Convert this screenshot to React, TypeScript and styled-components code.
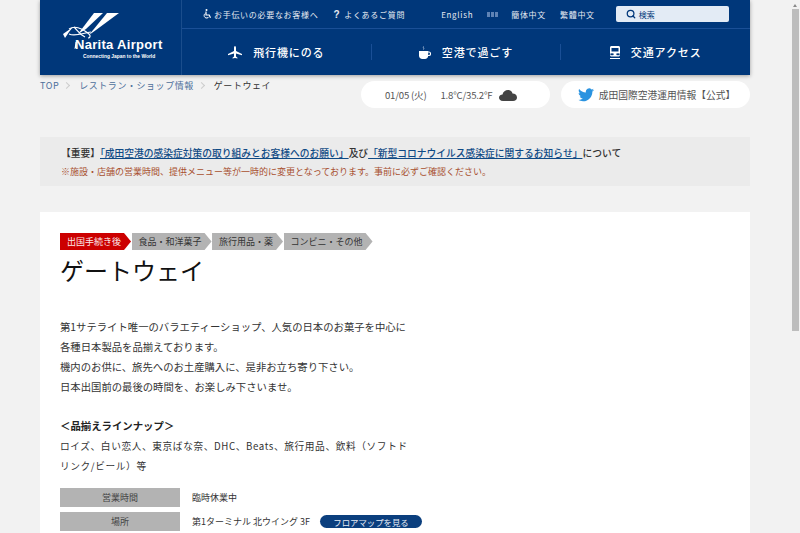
import React from 'react'
import styled, { createGlobalStyle } from 'styled-components'
import { Search } from 'lucide-react'

const GlobalStyle = createGlobalStyle`
  html, body {
    margin: 0;
    padding: 0;
    height: 533px;
    overflow: hidden;
  }
  body {
    background: #f2f2f2;
    color: #333;
    font-family: "Noto Sans CJK JP", "Noto Sans", sans-serif;
  }
  * {
    box-sizing: border-box;
  }
`

const Viewport = styled.div`
  display: flex;
  height: 533px;
  overflow: hidden;
`

const Page = styled.div`
  flex: 1;
  min-width: 0;
  padding: 0 40px;
`

const Scrollbar = styled.div`
  width: 10px;
  display: flex;
  flex-direction: column;
  align-items: flex-start;
  padding: 4px 0 0 2px;
`

const ArrowUp = styled.div`
  width: 0;
  height: 0;
  margin: 0 0 2px 1px;
  border-left: 2.5px solid transparent;
  border-right: 2.5px solid transparent;
  border-bottom: 3px solid #8a8a8a;
`

const Thumb = styled.div`
  width: 7px;
  height: 322px;
  background: #bdbdbd;
`

const Header = styled.header`
  display: flex;
  height: 75px;
  background: #00377a;
  box-shadow: 0 1px 4px rgba(0, 0, 0, 0.35);
  color: #fff;
`

const LogoLink = styled.a`
  width: 142px;
  flex: none;
  display: flex;
  flex-direction: column;
  align-items: flex-start;
  padding: 12px 0 0 21px;
  border-right: 1px solid #1a4d8c;
`

const LogoSvg = styled.svg`
  overflow: visible;
`

const LogoName = styled.div`
  font-family: "Liberation Sans", sans-serif;
  font-weight: 700;
  font-size: 13px;
  line-height: 13px;
  margin: -1px 0 0 14px;
  letter-spacing: 0.3px;
  white-space: nowrap;
`

const LogoTag = styled.div`
  font-family: "Liberation Sans", sans-serif;
  font-size: 4.9px;
  font-weight: 700;
  line-height: 7px;
  margin: 2px 0 0 22px;
  white-space: nowrap;
`

const HeaderMain = styled.div`
  flex: 1;
  display: flex;
  flex-direction: column;
`

const TopBar = styled.div`
  height: 29px;
  display: flex;
  align-items: center;
  border-bottom: 1px solid #1a4f96;
  padding-left: 21px;
  font-size: 8px;
  letter-spacing: 0.7px;
`

const HelpLink = styled.a<{ $gap: number }>`
  display: flex;
  align-items: center;
  gap: 2px;
  white-space: nowrap;
  margin-right: ${props => props.$gap}px;
  color: #e6ebf2;
`

const Question = styled.span`
  font-family: "Liberation Sans", sans-serif;
  font-weight: 700;
  font-size: 10px;
  margin-right: 2px;
`

const LangLink = styled.a<{ $gap: number }>`
  white-space: nowrap;
  margin-right: ${props => props.$gap}px;
  color: #e6ebf2;
`

const Korean = styled.span`
  width: 11px;
  height: 5px;
  margin-right: 13px;
  background: repeating-linear-gradient(90deg, #5f83b5 0 3px, transparent 3px 4px);
`

const SearchBox = styled.div`
  width: 113px;
  height: 16px;
  border-radius: 2px;
  background: #e3ebf5;
  color: #00377a;
  display: flex;
  align-items: center;
  gap: 3px;
  padding-left: 10px;
  font-size: 8px;
  letter-spacing: 0;
`

const Nav = styled.nav`
  flex: 1;
  display: flex;
  align-items: center;
`

const NavItem = styled.a<{ $divider?: boolean }>`
  flex: 1;
  height: 16px;
  display: flex;
  align-items: center;
  justify-content: center;
  gap: 11px;
  font-size: 11px;
  font-weight: 500;
  letter-spacing: 0.9px;
  white-space: nowrap;
  border-left: ${props => (props.$divider ? '1px solid #1a4f96' : 'none')};
`

const SubRow = styled.div`
  display: flex;
  justify-content: space-between;
  height: 62px;
`

const Crumbs = styled.ol`
  display: flex;
  align-items: center;
  height: 20px;
  margin: 0;
  padding: 0;
  list-style: none;
  font-size: 9px;
  letter-spacing: 0.55px;
`

const Crumb = styled.li<{ $current?: boolean }>`
  color: ${props => (props.$current ? '#333' : '#4d6f9a')};
`

const CrumbSep = styled.span`
  width: 5px;
  height: 5px;
  margin: 0 10px 0 5px;
  border-top: 1px solid #ccc;
  border-right: 1px solid #ccc;
  transform: rotate(45deg);
`

const Pills = styled.div`
  display: flex;
  gap: 11px;
  padding-top: 6px;
`

const Pill = styled.div<{ $center?: boolean }>`
  width: 189px;
  height: 27px;
  border-radius: 14px;
  background: #fff;
  display: flex;
  align-items: center;
  justify-content: ${props => (props.$center ? 'center' : 'flex-start')};
  padding-left: ${props => (props.$center ? 2 : 24)}px;
  font-size: 9.75px;
  color: #555;
  white-space: nowrap;
`

const DateText = styled.span`
  margin-right: 14px;
  font-size: 9.6px;
  letter-spacing: -0.2px;
`

const TempText = styled.span`
  font-size: 9.6px;
  letter-spacing: -0.2px;
`

const CloudIcon = styled.svg`
  width: 18px;
  height: 12px;
  margin-left: 7px;
`

const TwitterIcon = styled.svg`
  width: 16px;
  height: 14px;
  margin-right: 5px;
`

const Notice = styled.section`
  height: 49px;
  background: #ebebeb;
  padding: 8px 20px 0 21px;
  margin-bottom: 26px;
`

const NoticeLine = styled.p`
  margin: 0;
  font-size: 9.75px;
  font-weight: 500;
  line-height: 16px;
  white-space: nowrap;
  color: #333;
`

const NoticeLink = styled.a`
  color: #0f4a85;
  text-decoration: underline;
`

const NoticeNote = styled.p`
  margin: 4px 0 0;
  font-size: 9px;
  line-height: 14px;
  color: #a8502f;
  white-space: nowrap;
`

const Card = styled.main`
  background: #fff;
  padding: 21px 20px 0;
  height: 340px;
`

const Tags = styled.ul`
  display: flex;
  gap: 0.5px;
  margin: 0;
  padding: 0;
  list-style: none;
`

const Tag = styled.li<{ $accent?: boolean }>`
  height: 17px;
  display: flex;
  align-items: center;
  padding: 0 10px 0 7px;
  font-size: 9px;
  white-space: nowrap;
  color: ${props => (props.$accent ? '#fbe9e9' : '#333')};
  background: ${props => (props.$accent ? '#cc0000' : '#b3b3b3')};
  clip-path: polygon(0 0, calc(100% - 7px) 0, 100% 50%, calc(100% - 7px) 100%, 0 100%);
`

const Title = styled.h1`
  margin: 2px 0 29px;
  font-size: 24px;
  font-weight: 400;
  line-height: 36px;
  color: #111;
`

const Lead = styled.p`
  margin: 0 0 20px;
  font-size: 10.35px;
  line-height: 20px;
  color: #333;
  white-space: nowrap;
`

const SubHeading = styled.h2`
  margin: 2px 0 1px;
  font-size: 10.4px;
  font-weight: 700;
  line-height: 18px;
  color: #222;
`

const Lineup = styled.p`
  width: 352px;
  margin: 0 0 12px;
  font-size: 9.7px;
  line-height: 20px;
  letter-spacing: 0.6px;
  color: #333;
`

const InfoRow = styled.div`
  display: flex;
  align-items: center;
  margin-bottom: 5px;
`

const InfoLabel = styled.div`
  width: 120px;
  height: 19px;
  background: #b3b3b3;
  display: flex;
  align-items: center;
  justify-content: center;
  font-size: 9px;
  color: #444;
  margin-right: 12px;
`

const InfoValue = styled.div`
  font-size: 9px;
  color: #333;
  white-space: nowrap;
`

const MapButton = styled.a`
  width: 102px;
  height: 13px;
  border-radius: 7px;
  margin-left: 10px;
  background: #0b3f7e;
  color: #e8eef6;
  font-size: 8.4px;
  display: flex;
  align-items: center;
  justify-content: center;
`

const tags = ['食品・和洋菓子', '旅行用品・薬', 'コンビニ・その他']

const Logo = () => (
  <LogoSvg width="60" height="27" viewBox="0 0 60 27">
    <g fill="#fff">
      <path d="M33 1 L42 1 L25 17 L17 22 Z" />
      <path d="M46 1 L58 1 L35 18 L28 23 Z" />
      <path d="M2 22 L12 15 L8 20 L4 26 Z" />
      <path d="M14.500 30 L15.500 30 L15 36 L13.500 37 Z" />
    </g>
    <g fill="none" stroke="#fff" strokeWidth="1.2">
      <path d="M8 17 C14 13 22 17 28 22 C30 24 29 26 27 26" />
      <path d="M8 22 C14 25 22 21 30 20" />
      <path d="M13 15 C16 18 18 22 24 25" />
    </g>
  </LogoSvg>
)

const WheelchairIcon = () => (
  <svg width="9" height="10" viewBox="0 0 9 10">
    <circle cx="3.500" cy="1" r="1" fill="#fff" />
    <path d="M3 2.500 V6 H6.200 L7.500 8.800" fill="none" stroke="#fff" strokeWidth="1.2" />
    <path d="M2.200 4.500 A2.500 2.500 0 1 0 5.800 7.800" fill="none" stroke="#fff" strokeWidth="1" />
  </svg>
)

const PlaneIcon = () => (
  <svg width="14" height="13" viewBox="0 0 14 13">
    <path
      fill="#fff"
      d="M7 0 C7.700 0 8 1 8 2 V5 L14 8 V9.200 L8 7.500 V10.500 L9.500 11.700 V12.500 L7 12 L4.500 12.500 V11.700 L6 10.500 V7.500 L0 9.200 V8 L6 5 V2 C6 1 6.300 0 7 0 Z"
    />
  </svg>
)

const CupIcon = () => (
  <svg width="12" height="13" viewBox="0 0 12 13">
    <path d="M4.500 0.500 C3.500 1.500 5.500 2 4.500 3.500" fill="none" stroke="#9fb6d6" strokeWidth="1" />
    <path fill="#fff" d="M0 5 H9.200 V9.500 C9.200 11.500 7.700 13 6 13 H3.200 C1.500 13 0 11.500 0 9.500 Z" />
    <path d="M9 6 H10 C12 6 12 9.500 10 9.500 H9" fill="none" stroke="#fff" strokeWidth="1.1" />
  </svg>
)

const TrainIcon = () => (
  <svg width="10" height="13" viewBox="0 0 10 13">
    <path
      fill="#fff"
      fillRule="evenodd"
      d="M1.500 0 H8.500 C9.300 0 10 .7 10 1.500 V9 C10 9.800 9.300 10.500 8.500 10.500 H1.500 C.7 10.500 0 9.800 0 9 V1.500 C0 .7 .7 0 1.500 0 Z M1.500 2 V5.500 H8.500 V2 Z M2 7.500 A1 1 0 1 0 2 9 A1 1 0 1 0 2 7.500 Z M8 7.500 A1 1 0 1 0 8 9 A1 1 0 1 0 8 7.500 Z"
    />
    <path d="M0 13 H10 V12 H0 Z" fill="#fff" />
  </svg>
)

export default function App() {
  return (
    <Viewport>
      <GlobalStyle />
      <Page>
        <Header>
          <LogoLink>
            <Logo />
            <LogoName>Narita Airport</LogoName>
            <LogoTag>Connecting Japan to the World</LogoTag>
          </LogoLink>
          <HeaderMain>
            <TopBar>
              <HelpLink $gap={15}>
                <WheelchairIcon />
                お手伝いの必要なお客様へ
              </HelpLink>
              <HelpLink $gap={36}>
                <Question>?</Question>
                よくあるご質問
              </HelpLink>
              <LangLink $gap={14}>English</LangLink>
              <Korean />
              <LangLink $gap={14}>簡体中文</LangLink>
              <LangLink $gap={21}>繁體中文</LangLink>
              <SearchBox>
                <Search size={10} strokeWidth={3} />
                検索
              </SearchBox>
            </TopBar>
            <Nav>
              <NavItem>
                <PlaneIcon />
                飛行機にのる
              </NavItem>
              <NavItem $divider>
                <CupIcon />
                空港で過ごす
              </NavItem>
              <NavItem $divider>
                <TrainIcon />
                交通アクセス
              </NavItem>
            </Nav>
          </HeaderMain>
        </Header>

        <SubRow>
          <Crumbs>
            <Crumb>TOP</Crumb>
            <CrumbSep />
            <Crumb>レストラン・ショップ情報</Crumb>
            <CrumbSep />
            <Crumb $current>ゲートウェイ</Crumb>
          </Crumbs>
          <Pills>
            <Pill>
              <DateText>01/05 (火)</DateText>
              <TempText>1.8°C/35.2°F</TempText>
              <CloudIcon viewBox="0 0 18 12">
                <path
                  fill="#444"
                  d="M4 12 C1 12 0 10 0 8.500 C0 6.500 2 5.500 3.500 5.500 C4 2.500 6.500 1 9 1 C11.500 1 13 2.500 13.500 4.500 C16 4.500 18 6 18 8.500 C18 10.500 16.500 12 14 12 Z"
                />
              </CloudIcon>
            </Pill>
            <Pill $center>
              <TwitterIcon viewBox="0 0 24 20">
                <path
                  fill="#2a93e0"
                  d="M24 2.400c-.9.4-1.800.7-2.800.8 1-.6 1.800-1.600 2.200-2.700-1 .6-2 1-3.100 1.200A4.900 4.900 0 0 0 11.900 6.200C7.800 6 4.200 4 1.700.9c-1.300 2.300-.6 5.100 1.500 6.600-.8 0-1.600-.2-2.200-.6 0 2.400 1.700 4.400 3.900 4.900-.7.2-1.500.2-2.200.1.6 2 2.400 3.400 4.600 3.400A9.900 9.900 0 0 1 0 17.300 14 14 0 0 0 7.500 19.500c9.100 0 14.300-7.700 14-14.600 1-.7 1.800-1.500 2.500-2.500z"
                />
              </TwitterIcon>
              成田国際空港運用情報【公式】
            </Pill>
          </Pills>
        </SubRow>

        <Notice>
          <NoticeLine>
            【重要】<NoticeLink>「成田空港の感染症対策の取り組みとお客様へのお願い」</NoticeLink>及び
            <NoticeLink>「新型コロナウイルス感染症に関するお知らせ」</NoticeLink>について
          </NoticeLine>
          <NoticeNote>
            ※施設・店舗の営業時間、提供メニュー等が一時的に変更となっております。事前に必ずご確認ください。
          </NoticeNote>
        </Notice>

        <Card>
          <Tags>
            <Tag $accent>出国手続き後</Tag>
            {tags.map(tag => (
              <Tag key={tag}>{tag}</Tag>
            ))}
          </Tags>
          <Title>ゲートウェイ</Title>
          <Lead>
            第1サテライト唯一のバラエティーショップ、人気の日本のお菓子を中心に
            <br />
            各種日本製品を品揃えております。
            <br />
            機内のお供に、旅先へのお土産購入に、是非お立ち寄り下さい。
            <br />
            日本出国前の最後の時間を、お楽しみ下さいませ。
          </Lead>
          <SubHeading>＜品揃えラインナップ＞</SubHeading>
          <Lineup>
            ロイズ、白い恋人、東京ばな奈、DHC、Beats、旅行用品、飲料（ソフトドリンク/ビール）等
          </Lineup>
          <InfoRow>
            <InfoLabel>営業時間</InfoLabel>
            <InfoValue>臨時休業中</InfoValue>
          </InfoRow>
          <InfoRow>
            <InfoLabel>場所</InfoLabel>
            <InfoValue>第1ターミナル 北ウイング 3F</InfoValue>
            <MapButton>フロアマップを見る</MapButton>
          </InfoRow>
        </Card>
      </Page>
      <Scrollbar>
        <ArrowUp />
        <Thumb />
      </Scrollbar>
    </Viewport>
  )
}
